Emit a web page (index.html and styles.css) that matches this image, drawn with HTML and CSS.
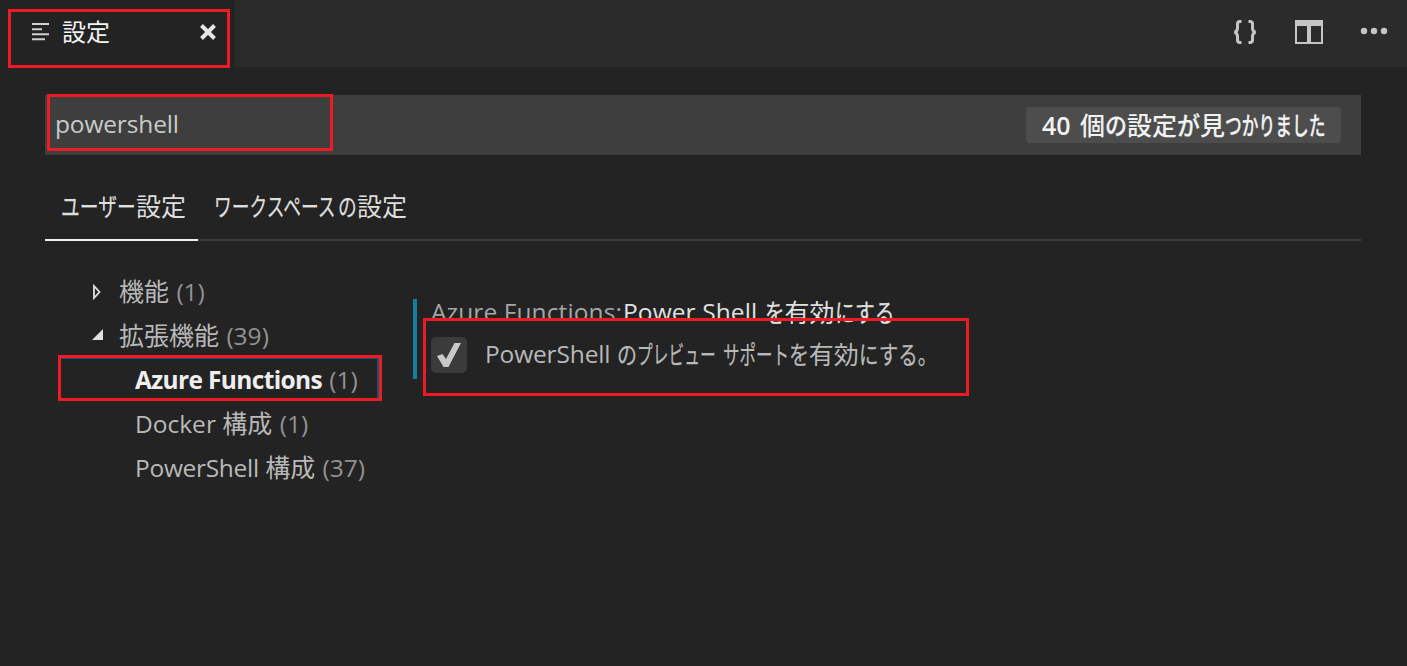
FILE: index.html
```html
<!DOCTYPE html>
<html lang="ja">
<head>
<meta charset="utf-8">
<title>設定</title>
<link rel="stylesheet" href="styles.css">
</head>
<body>
<header class="tabbar">
  <div class="tab">
    <svg class="tab-icon" width="18" height="20" viewBox="0 0 18 20"><path d="M0 2H17M0 7.2H10M0 12.2H17M0 17.3H13" stroke="#d0d0d0" stroke-width="2"/></svg>
    <span class="tab-title">設定</span>
    <svg class="tab-close" width="18" height="18" viewBox="0 0 18 18"><path d="M2.5 2.5L15.500 15.500M15.500 2.5L2.5 15.500" stroke="#e7e7e7" stroke-width="4"/></svg>
  </div>
  <div class="actions">
    <svg width="26" height="26" viewBox="0 0 26 26"><path d="M9.500 2.500H8Q5.500 2.500 5.500 5V9Q5.500 12.500 2.500 13.200Q5.500 14 5.500 17.500V21Q5.500 23.500 8 23.500H9.500M16.500 2.500H18Q20.500 2.500 20.500 5V9Q20.500 12.500 23.500 13.200Q20.500 14 20.500 17.500V21Q20.500 23.500 18 23.500H16.500" fill="none" stroke="#c5c5c5" stroke-width="3"/></svg>
    <svg width="28" height="24" viewBox="0 0 28 24"><path fill-rule="evenodd" fill="#c5c5c5" d="M0 0H28V24H0ZM2 6V22H12V6ZM16 6V22H26V6Z"/></svg>
    <svg class="more" width="28" height="8" viewBox="0 0 28 8"><g fill="#c5c5c5"><circle cx="4" cy="4" r="3.200"/><circle cx="14" cy="4" r="3.200"/><circle cx="24" cy="4" r="3.200"/></g></svg>
  </div>
</header>
<main class="settings">
  <div class="search">
    <span class="query">powershell</span>
    <div class="count"><span class="number">40</span><span>個</span><span class="kana n1 s88">の</span><span>設定</span><span class="kana n1 s92">が</span><span>見</span><span class="kana n6 s67">つかりました</span></div>
  </div>
  <nav class="scopes">
    <div class="scope active"><span class="kana n4 s75">ユーザー</span><span>設定</span></div>
    <div class="scope"><span class="kana n7 s71">ワークスペース</span><span class="kana n1 s75">の</span><span>設定</span></div>
  </nav>
  <div class="content">
    <ul class="tree">
      <li><svg class="arrow" width="12" height="18" viewBox="0 0 12 18"><path d="M3 3V15L8.500 9Z" fill="none" stroke="#e0e0e0" stroke-width="1.800"/></svg><span class="kanji">機能</span> <i>(1)</i></li>
      <li><svg class="arrow" width="12" height="18" viewBox="0 0 12 18"><path d="M12 2V13H1Z" fill="#e0e0e0"/></svg><span class="kanji">拡張機能</span> <i>(39)</i></li>
      <li class="child selected"><b>Azure Functions</b> <i>(1)</i></li>
      <li class="child"><span class="docker">Docker</span> <span class="kanji">構成</span> <i>(1)</i></li>
      <li class="child"><span class="shell">PowerShell</span> <span class="kanji">構成</span> <i>(37)</i></li>
    </ul>
    <section class="setting">
      <div class="title"><span class="category">Azure Functions:</span><span class="name">Power Shell</span><span class="kana n1 s78">を</span><span class="kanji">有効</span><span class="kana n3 s79">にする</span></div>
      <div class="option">
        <span class="checkbox"><svg width="26" height="28" viewBox="0 0 26 28"><path d="M1 15L6.500 13L10 18L18.500 2H25L12.500 26H7.500Z" fill="#c9c9c9"/></svg></span>
        <span class="description"><span class="power">PowerShell</span><span class="kana n1 s80">の</span><span class="kana n5 s63">プレビュー</span><span class="kana support n4 s66">サポート</span><span class="kana n1 s80">を</span><span class="kanji">有効</span><span class="kana n4 s78">にする。</span></span>
      </div>
    </section>
  </div>
</main>
<div class="mark mark-tab"></div>
<div class="mark mark-search"></div>
<div class="mark mark-tree"></div>
<div class="mark mark-setting"></div>
</body>
</html>
```
FILE: styles.css
```css
* { box-sizing: border-box; }
body {
  margin: 0;
  height: 666px;
  overflow: hidden;
  background: #232323;
  color: #b8b8b8;
  font: 24.5px/36px "Open Sans", "Noto Sans CJK JP", sans-serif;
  white-space: nowrap;
}
.tabbar { display: flex; justify-content: space-between; height: 67px; background: #2b2b2b; }
.tab { display: flex; align-items: flex-start; width: 235px; padding: 14px 18px 0 32px; background: #232323; color: #f4f4f4; }
.tab-icon { margin-top: 8px; }
.tab-title { margin-left: 12px; font-size: 24px; }
.tab-close { margin: 9px 0 0 auto; }
.actions { display: flex; align-items: center; gap: 37px; padding: 0 19px 4px 0; }
.more { margin-bottom: 2px; }
.settings { padding: 28px 46px 0 45px; }
.search { display: flex; align-items: center; justify-content: space-between; height: 60px; padding: 0 20px 0 10px; background: #3e3e3e; color: #cacaca; }
.query { padding-bottom: 2px; letter-spacing: -0.15px; }
.count { display: flex; width: 315px; height: 36px; padding-left: 16px; border-radius: 4px; background: #4d4d4d; color: #f2f2f2; font-size: 25px; font-weight: 500; line-height: 36px; }
.number { width: 38px; font-weight: 600; }
.kanji { font-size: 25px; line-height: 1; }
.title .kanji, .description .kanji { line-height: inherit; }
.kana { display: inline-block; width: calc(var(--n) * 25px * var(--s)); font-size: 25px; -webkit-text-stroke: 0.25px; transform: scaleX(var(--s)); transform-origin: left; }
.n1 { --n: 1; } .n3 { --n: 3; } .n4 { --n: 4; } .n5 { --n: 5; } .n6 { --n: 6; } .n7 { --n: 7; }
.s63 { --s: .63; } .s66 { --s: .66; } .s67 { --s: .67; } .s71 { --s: .71; } .s75 { --s: .75; }
.s78 { --s: .78; } .s79 { --s: .79; } .s80 { --s: .80; } .s88 { --s: .88; } .s92 { --s: .92; }
.scopes { display: flex; height: 86px; padding-top: 34px; border-bottom: 2px solid #3d3d3d; color: #dedede; font-size: 25px; line-height: 35px; }
.scope { display: flex; height: 52px; padding: 0 1px 0 16px; }
.active { width: 153px; border-bottom: 2px solid #f0f0f0; }
.content { display: flex; padding-top: 31px; }
.tree { width: 368px; margin: 0; padding: 0; list-style: none; line-height: 40px; }
.tree li { height: 44px; padding-left: 46px; }
.tree .child { padding-left: 90px; }
.arrow { margin-right: 16px; vertical-align: 0; }
.tree i { margin-left: 1px; color: #929292; font-style: normal; }
.tree b { color: #eee; letter-spacing: -0.65px; }
.docker { letter-spacing: 0; }
.shell { letter-spacing: -0.3px; }
.setting { height: 80px; margin-top: 27px; padding-left: 14px; border-left: 4px solid #187c9e; }
.title { display: flex; height: 34px; line-height: 26px; color: #e0e0e0; }
.category { width: 192px; color: #a5a5a5; letter-spacing: 0.1px; }
.name { width: 142px; letter-spacing: 0.1px; }
.option { display: flex; align-items: center; height: 44px; }
.checkbox { display: flex; align-items: center; justify-content: center; width: 36px; height: 36px; border-radius: 5px; background: #3b3b3b; }
.description { display: flex; margin-left: 18px; padding-bottom: 3px; }
.power { width: 132px; letter-spacing: -0.15px; }
.support { margin-left: 7px; }
.mark { position: absolute; border: 3px solid #ed1c24; }
.mark-tab { left: 8px; top: 9px; width: 222px; height: 59px; }
.mark-search { left: 47px; top: 94px; width: 286px; height: 57px; }
.mark-tree { left: 58px; top: 355px; width: 324px; height: 46px; box-shadow: inset -2px 1px #1b4f78; }
.mark-setting { left: 423px; top: 318px; width: 546px; height: 78px; }
```
